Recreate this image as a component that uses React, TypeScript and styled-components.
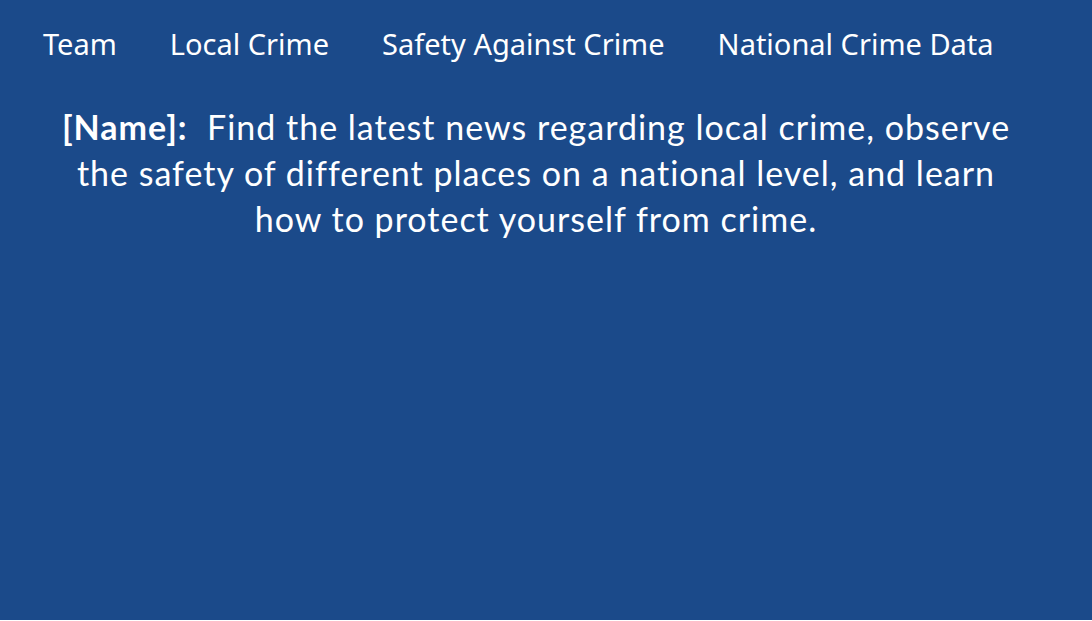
import React from "react";
import styled, { createGlobalStyle } from "styled-components";

const Global = createGlobalStyle`
  html, body { margin: 0; padding: 0; background: #ffffff; }
  #root { width: 1092px; }
`;

const Page = styled.div`
  width: 1092px;
  height: 620px;
  background: #1b4a8a;
  color: #ffffff;
  display: flex;
  flex-direction: column;
`;

const Nav = styled.nav`
  display: flex;
  align-items: center;
  padding: 26px 0 0 43px;
  gap: 53px;
`;

const NavLink = styled.a`
  font-family: "Noto Sans", sans-serif;
  font-size: 29px;
  line-height: 36px;
  color: #ffffff;
  text-decoration: none;
`;

const Intro = styled.p`
  margin: 42px 20px 0 0;
  font-family: "Lato", sans-serif;
  font-size: 34px;
  line-height: 46px;
  letter-spacing: 1px;
  text-align: center;
  padding: 0 20px;
`;

const Strong = styled.b`
  font-weight: 700;
`;

export default function App() {
  return (
    <>
      <Global />
      <Page>
        <Nav>
          <NavLink>Team</NavLink>
          <NavLink>Local Crime</NavLink>
          <NavLink>Safety Against Crime</NavLink>
          <NavLink>National Crime Data</NavLink>
        </Nav>
        <Intro>
          <Strong>[Name]:</Strong>&nbsp; Find the latest news regarding local crime, observe
          <br />
          the safety of different places on a national level, and learn
          <br />
          how to protect yourself from crime.
        </Intro>
      </Page>
    </>
  );
}
